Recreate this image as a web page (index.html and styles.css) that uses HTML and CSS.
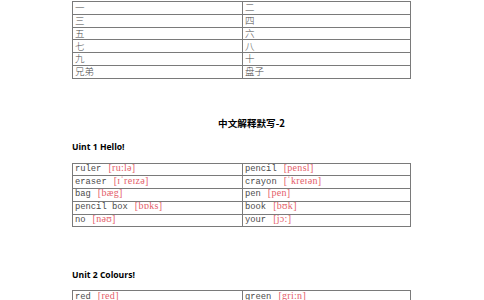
FILE: index.html
```html
<!DOCTYPE html>
<html lang="zh">
<head>
<meta charset="utf-8">
<link rel="stylesheet" href="styles.css">
</head>
<body>
<div class="page">
  <table class="grid six">
    <tr><td>一</td><td>二</td></tr>
    <tr><td>三</td><td>四</td></tr>
    <tr><td>五</td><td>六</td></tr>
    <tr><td>七</td><td>八</td></tr>
    <tr><td>九</td><td>十</td></tr>
    <tr><td>兄弟</td><td>盘子</td></tr>
  </table>

  <h1 class="title">中文解释默写-2</h1>

  <h2 class="unit first">Uint 1 Hello!</h2>
  <table class="grid words">
    <tr><td>ruler<span class="ph">[ru:lə]</span></td><td>pencil<span class="ph">[pensl]</span></td></tr>
    <tr><td>eraser<span class="ph">[ɪˈreɪzə]</span></td><td>crayon<span class="ph">[ˈkreɪən]</span></td></tr>
    <tr><td>bag<span class="ph">[bæg]</span></td><td>pen<span class="ph">[pen]</span></td></tr>
    <tr><td>pencil box<span class="ph">[bɒks]</span></td><td>book<span class="ph">[bʊk]</span></td></tr>
    <tr><td>no<span class="ph">[nəʊ]</span></td><td>your<span class="ph">[jɔ:]</span></td></tr>
  </table>

  <h2 class="unit second">Unit 2 Colours!</h2>
  <table class="grid words">
    <tr><td>red<span class="ph">[red]</span></td><td>green<span class="ph">[gri:n]</span></td></tr>
  </table>
</div>
</body>
</html>
```

FILE: styles.css
```css
html, body {
  margin: 0;
  padding: 0;
  background: #ffffff;
}

.page {
  width: 339px;
  margin-left: 72px;
  padding-top: 1px;
}

.grid {
  width: 339px;
  border-collapse: collapse;
  table-layout: fixed;
}

.grid td {
  border: 1px solid #7a7a7a;
  height: 11.75px;
  padding: 0 0 0 2px;
  color: #4a4a4a;
  white-space: nowrap;
  overflow: hidden;
  vertical-align: middle;
}

.grid td:first-child {
  width: 167px;
}

.six td {
  font-family: "Noto Sans CJK SC", sans-serif;
  font-size: 9.5px;
  font-weight: 300;
  line-height: 11px;
}

.words td {
  font-family: "Liberation Mono", "Noto Sans CJK SC", monospace;
  font-size: 8.8px;
  line-height: 11px;
}

.ph {
  margin-left: 7px;
  color: #e4606a;
  font-family: "Liberation Serif", "DejaVu Serif", serif;
  font-size: 10px;
  line-height: 0;
  letter-spacing: 0.3px;
}

.title {
  margin: 37px 0 0 0;
  padding-left: 20px;
  text-align: center;
  font-family: "Noto Sans CJK SC", sans-serif;
  font-size: 9.6px;
  font-weight: 700;
  line-height: 14px;
  color: #000000;
}

.unit {
  margin: 0;
  font-family: "Open Sans", "Liberation Sans", sans-serif;
  font-size: 8.6px;
  font-weight: 700;
  line-height: 14px;
  color: #000000;
}

.unit.first {
  margin-top: 10px;
  margin-bottom: 9px;
}

.unit.second {
  margin-top: 41px;
  margin-bottom: 8px;
}
```
